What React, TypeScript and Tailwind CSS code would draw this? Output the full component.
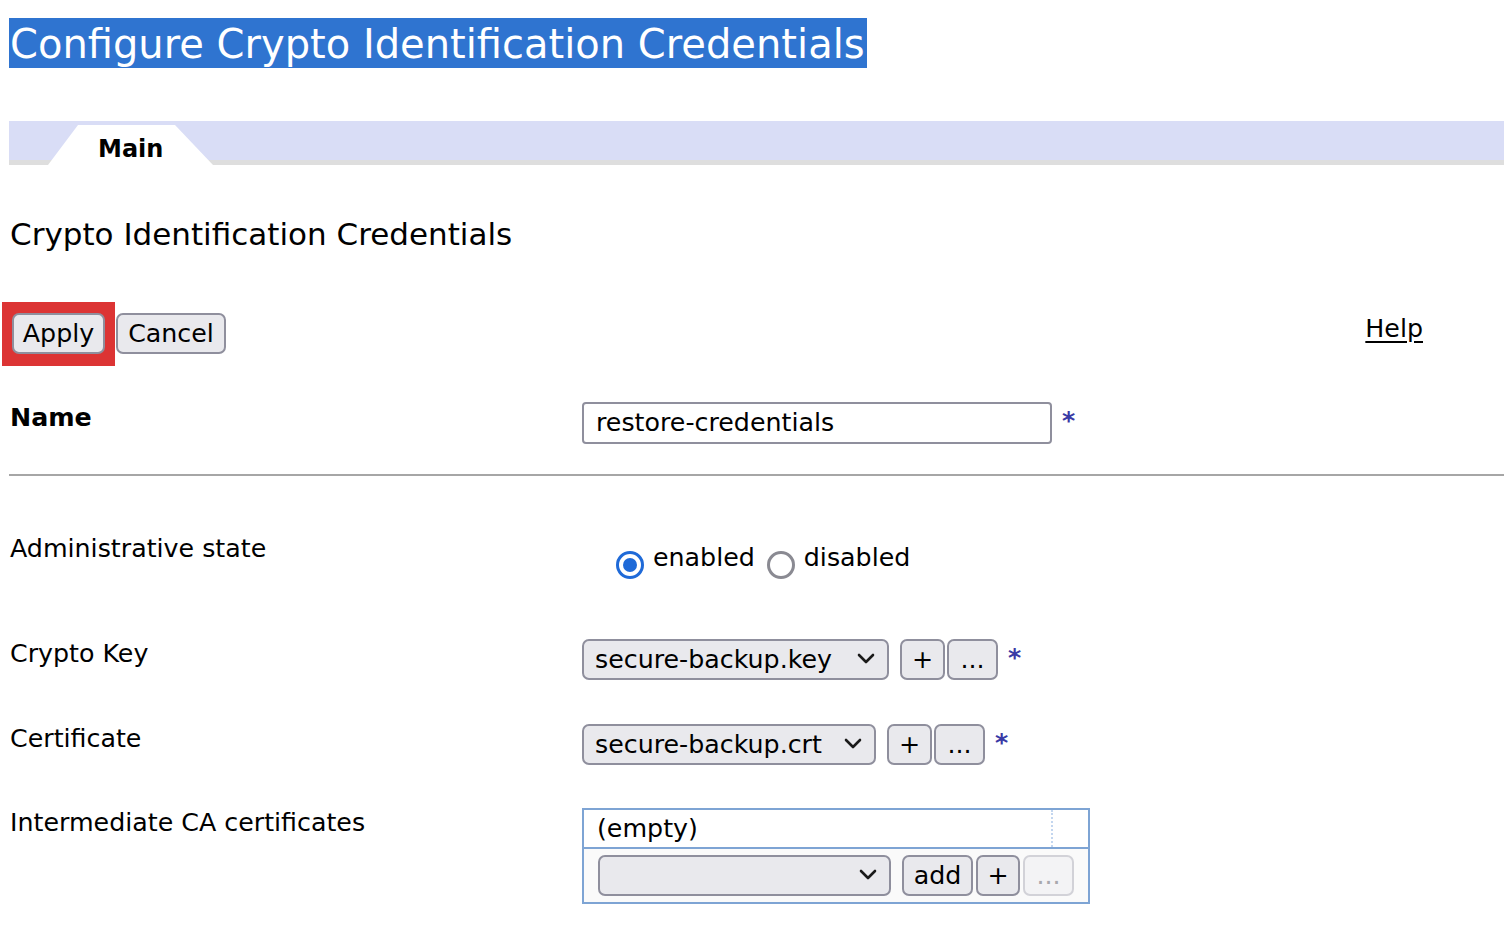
import React from "react";

function Chevron() {
  return (
    <svg width="18" height="12" viewBox="0 0 18 12" className="shrink-0">
      <polyline points="2,2 9,9 16,2" fill="none" stroke="#1a1a1a" strokeWidth="2.6" strokeLinecap="round" strokeLinejoin="round" />
    </svg>
  );
}

function Btn({ children, w, disabled }: { children: React.ReactNode; w: string; disabled?: boolean }) {
  return (
    <button
      className={
        "h-[41px] rounded-[7px] border-2 flex items-center justify-center leading-none " +
        w +
        (disabled ? " border-[#d2d2d8] bg-[#f3f3f5] text-[#a8a8ad]" : " border-[#8f8f9d] bg-[#e9e9ed] text-black")
      }
    >
      {children}
    </button>
  );
}

function Select({ value, w }: { value: string; w: string }) {
  return (
    <div className={"h-[41px] rounded-[7px] border-2 border-[#8f8f9d] bg-[#e9e9ed] flex items-center justify-between pl-[11px] pr-[12px] " + w}>
      <span className="leading-none">{value}</span>
      <Chevron />
    </div>
  );
}

function Star() {
  return <span className="text-[#3a3aa6] font-bold leading-none self-start mt-[6px]">*</span>;
}

function Radio({ on }: { on?: boolean }) {
  return (
    <span
      className={
        "mt-[8px] w-[28px] h-[28px] rounded-full border-[3px] flex items-center justify-center shrink-0 " +
        (on ? "border-[#1f6ad8]" : "border-[#8a8a92]")
      }
    >
      {on && <span className="w-[14px] h-[14px] rounded-full bg-[#1f6ad8]" />}
    </span>
  );
}

export default function App() {
  return (
    <div className="min-h-screen bg-white text-black text-[25.3px] font-['DejaVu_Sans',Verdana,sans-serif]">
      {/* page title */}
      <div className="pl-[9px] pt-[18px]">
        <h1 className="inline-block bg-[#2f74d0] text-white text-[40px] leading-[48px] pl-[1px] pr-[2px] pt-[2px]">
          Configure Crypto Identification Credentials
        </h1>
      </div>

      {/* tabs */}
      <div className="mt-[52px] ml-[9px] h-[44px] bg-[#d9ddf6] shadow-[inset_0_-5px_0_#dedede] flex items-end">
        <div className="ml-[39px] w-[165px] h-[40px] bg-white [clip-path:polygon(0_100%,30px_0,127px_0,165px_100%)] pl-[50px] pt-[9px] font-bold text-[24px] leading-[30px]">
          Main
        </div>
      </div>

      <h2 className="mt-[51px] pl-[10px] text-[31px] leading-[36px]">Crypto Identification Credentials</h2>

      {/* actions */}
      <div className="mt-[50px] flex items-start justify-between pl-[2px] pr-[81px]">
        <div className="flex items-start">
          <div className="bg-[#dc3434] px-[10px] pt-[11px] pb-[12px]">
            <Btn w="w-[93px]">Apply</Btn>
          </div>
          <div className="ml-[1px] mt-[11px]">
            <Btn w="w-[110px]">Cancel</Btn>
          </div>
        </div>
        <a className="mt-[12px] underline underline-offset-[4px] decoration-[2px] leading-[30px]">Help</a>
      </div>

      {/* form */}
      <div className="mt-[36px] pl-[10px]">
        <div className="grid grid-cols-[572px_1fr] items-start">
          <div className="font-bold leading-[30px] mt-[1px]">Name</div>
          <div className="flex items-start gap-[10px]">
            <div className="w-[470px] h-[42px] border-2 border-[#8f8f9d] rounded-[4px] flex items-center pl-[12px] leading-none">
              restore-credentials
            </div>
            <Star />
          </div>
        </div>
      </div>

      <div className="mt-[30px] ml-[9px] h-[2px] bg-[#a6a6a6]" />

      <div className="mt-[58px] pl-[10px] flex flex-col">
        <div className="h-[105px] grid grid-cols-[572px_1fr] items-start">
          <div className="leading-[30px]">Administrative state</div>
          <div className="ml-[34px] mt-[9px] flex items-start leading-[30px]">
            <Radio on />
            <span className="ml-[9px]">enabled</span>
            <span className="ml-[12px] flex items-start">
              <Radio />
            </span>
            <span className="ml-[9px]">disabled</span>
          </div>
        </div>

        <div className="h-[85px] grid grid-cols-[572px_1fr] items-start">
          <div className="leading-[30px]">Crypto Key</div>
          <div className="flex items-start">
            <Select value="secure-backup.key" w="w-[307px]" />
            <div className="ml-[11px] flex gap-[2px]">
              <Btn w="w-[45px]">+</Btn>
              <Btn w="w-[51px]">...</Btn>
            </div>
            <span className="ml-[10px] flex">
              <Star />
            </span>
          </div>
        </div>

        <div className="h-[84px] grid grid-cols-[572px_1fr] items-start">
          <div className="leading-[30px]">Certificate</div>
          <div className="flex items-start">
            <Select value="secure-backup.crt" w="w-[294px]" />
            <div className="ml-[11px] flex gap-[2px]">
              <Btn w="w-[45px]">+</Btn>
              <Btn w="w-[51px]">...</Btn>
            </div>
            <span className="ml-[10px] flex">
              <Star />
            </span>
          </div>
        </div>

        <div className="grid grid-cols-[572px_1fr] items-start">
          <div className="leading-[30px]">Intermediate CA certificates</div>
          <div className="w-[508px] border-2 border-[#7ea4d4]">
            <div className="h-[39px] flex items-center justify-between pl-[13px] border-b-2 border-[#7ea4d4]">
              <span className="leading-none">(empty)</span>
              <span className="mr-[35px] h-full border-l-2 border-dotted border-[#c3d6ef]" />
            </div>
            <div className="h-[53px] bg-[#fafafa] flex items-center pl-[14px]">
              <Select value="" w="w-[293px]" />
              <div className="ml-[11px] flex gap-[3px]">
                <Btn w="w-[71px]">add</Btn>
                <Btn w="w-[44px]">+</Btn>
                <Btn w="w-[51px]" disabled>
                  ...
                </Btn>
              </div>
            </div>
          </div>
        </div>
      </div>
    </div>
  );
}
